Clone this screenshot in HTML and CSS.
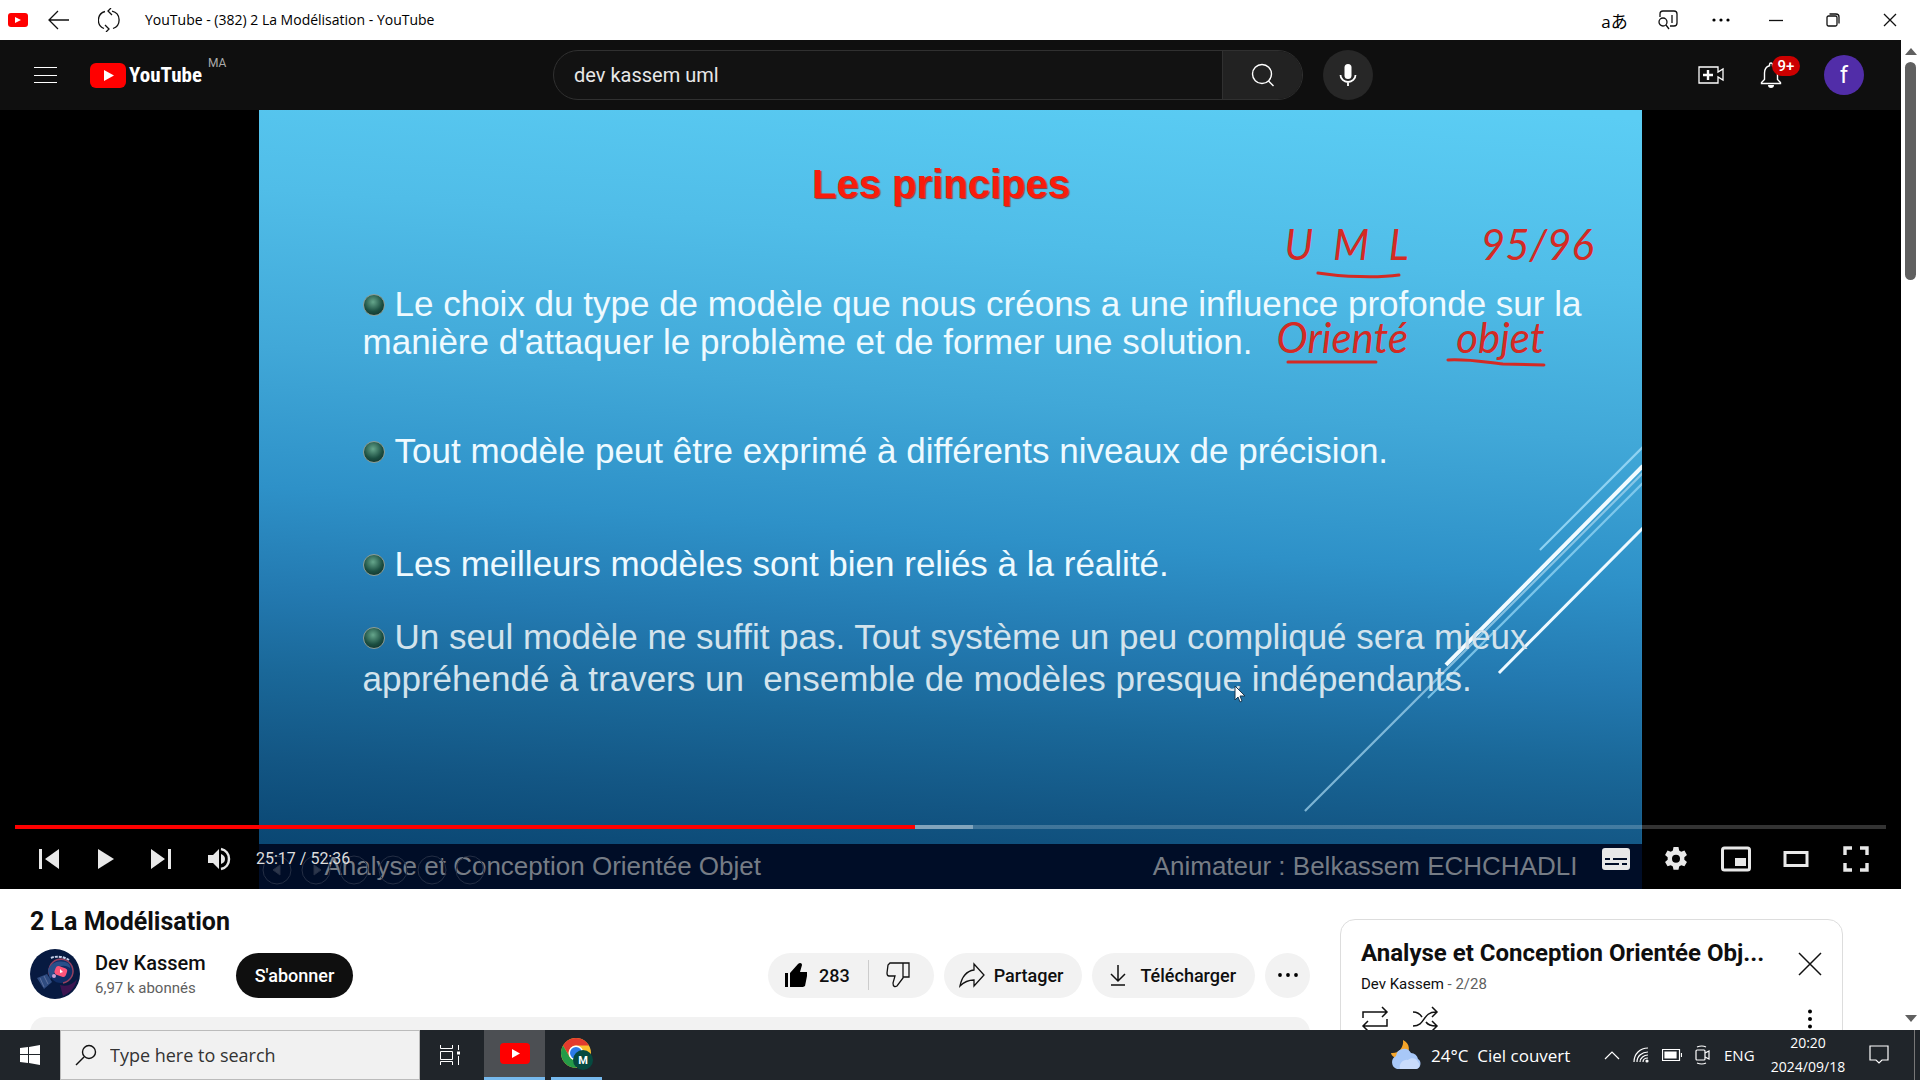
FILE: index.html
```html
<!DOCTYPE html>
<html lang="fr">
<head>
<meta charset="utf-8">
<title>YouTube - (382) 2 La Modélisation - YouTube</title>
<link rel="stylesheet" href="styles.css">
</head>
<body>
<div class="titlebar">
  <svg class="tb-logo" viewBox="0 0 20 14" width="20" height="14"><rect width="20" height="14" rx="3" fill="#f00"/><path d="M7 4v6l6-3z" fill="#fff"/></svg>
  <button class="plain" aria-label="Retour"><svg width="22" height="20" viewBox="0 0 22 20" class="line"><path d="M21 10H1M10 1L1 10l9 9"/></svg></button>
  <button class="plain refresh" aria-label="Actualiser"><svg width="22" height="24" viewBox="0 0 22 24" class="line"><path d="M7 3.500A9 9 0 0 0 6 20.500M15 20.500A9 9 0 0 0 14 3.200M13 0L10 3l4 4M8 24l3-3-4-4"/></svg></button>
  <span class="tb-title">YouTube - (382) 2 La Modélisation - YouTube</span>
  <div class="tb-right">
    <button class="plain translate" aria-label="Traduire">aあ</button>
    <button class="plain" aria-label="Rechercher dans la page"><svg width="20" height="20" viewBox="0 0 20 20" class="line"><path d="M2 7V4a3 3 0 0 1 3-3h11a3 3 0 0 1 3 3v9a3 3 0 0 1-3 3h-4M14 5v8M8 15l3 4"/><circle cx="5" cy="12" r="4"/></svg></button>
    <button class="plain" aria-label="Plus"><svg width="18" height="4" viewBox="0 0 18 4"><circle cx="2" cy="2" r="1.600"/><circle cx="9" cy="2" r="1.600"/><circle cx="16" cy="2" r="1.600"/></svg></button>
    <button class="plain" aria-label="Réduire"><svg width="14" height="14" viewBox="0 0 14 14" class="line"><path d="M0 7.500h14"/></svg></button>
    <button class="plain" aria-label="Restaurer"><svg width="14" height="14" viewBox="0 0 14 14" class="line"><rect x="1" y="3" width="10" height="10" rx="1.500"/><path d="M3.500 1H10a3 3 0 0 1 3 3v6.500"/></svg></button>
    <button class="plain" aria-label="Fermer"><svg width="14" height="14" viewBox="0 0 14 14" class="line"><path d="M1 1l12 12M13 1L1 13"/></svg></button>
  </div>
</div>

<div class="viewport">
  <div class="page">
    <header class="masthead">
      <div class="mh-left">
        <button class="plain" aria-label="Menu"><svg width="24" height="18" viewBox="0 0 24 18" stroke="#fff"><path d="M0 1.500h23M0 9.500h23M0 16.500h23"/></svg></button>
        <a class="logo" href="#"><svg viewBox="0 0 36 25" width="36" height="25"><rect width="36" height="25" rx="6" fill="#f00"/><path d="M14 7v11l10-5.500z" fill="#fff"/></svg><span>YouTube</span><sup>MA</sup></a>
      </div>
      <div class="mh-center">
        <form class="search">
          <input type="text" value="dev kassem uml" aria-label="Rechercher">
          <button type="button" aria-label="Lancer la recherche"><svg width="24" height="24" viewBox="0 0 24 24" fill="none" stroke="#fff" stroke-width="1.400"><circle cx="11" cy="11" r="9.500"/><path d="M17.500 18l5 5"/></svg></button>
        </form>
        <button class="mic" aria-label="Recherche vocale"><svg width="18" height="24" viewBox="0 0 18 24"><rect x="5.500" y="1" width="7" height="15" rx="3.500" fill="#fff"/><path d="M1.500 12a7.500 7 0 0 0 15 0M9 19v4" fill="none" stroke="#fff" stroke-width="1.800"/></svg></button>
      </div>
      <div class="mh-right">
        <button class="plain" aria-label="Créer"><svg width="26" height="20" viewBox="0 0 26 20" fill="none" stroke="#fff"><path d="M1 2h19v5l5-3v11l-5-3v6H1z" stroke-width="1.300"/><path d="M10 5v10M5 10h10" stroke-width="2.400"/></svg></button>
        <button class="plain bell" aria-label="Notifications"><svg width="22" height="26" viewBox="0 0 22 26"><path d="M1.500 21.500v-1l3-3V11c0-4 2-6.500 5-7.300V2.500a1.500 1.500 0 0 1 3 0v1.200c3 .8 5 3.300 5 7.300v6.500l3 3v1z" fill="none" stroke="#fff" stroke-width="1.400"/><path d="M8 23h6a3 3 0 0 1-6 0z" fill="#fff"/></svg><span class="badge">9+</span></button>
        <button class="account" aria-label="Compte">f</button>
      </div>
    </header>

    <section class="player">
      <div class="slide">
        <svg class="art" viewBox="0 0 1384 779" preserveAspectRatio="none" aria-hidden="true">
          <g fill="none" stroke="#8fd2f2" stroke-width="2.200">
            <path d="M1281 440L1384 337"/>
            <path d="M1384 363L1046 701" stroke="#9fd2ec" stroke-opacity=".75"/>
            <path d="M1384 373L1169 588" stroke-opacity=".8"/>
          </g>
          <path d="M1384 356L1187 555" stroke="#f2fbff" stroke-width="4"/>
          <path d="M1384 418L1240 563" stroke="#eef9ff" stroke-width="3"/>
          <path d="M1383.500 0v735" stroke="#6cc4ea" stroke-opacity=".6"/>
          <g fill="none" stroke="#d42a24" stroke-width="3" stroke-linecap="round">
            <path d="M1059 163c25 4 60 5 81 2M1029 252h88M1189 250c25-1 40 3 55 4l41 1"/>
          </g>
        </svg>
        <h2>Les principes</h2>
        <ul class="principles">
          <li><i class="bullet"></i>Le choix du type de modèle que nous créons a une influence profonde sur la<br>manière d'attaquer le problème et de former une solution.</li>
          <li><i class="bullet"></i>Tout modèle peut être exprimé à différents niveaux de précision.</li>
          <li><i class="bullet"></i>Les meilleurs modèles sont bien reliés à la réalité.</li>
          <li><i class="bullet"></i>Un seul modèle ne suffit pas. Tout système un peu compliqué sera mieux<br>appréhendé à travers un&nbsp; ensemble de modèles presque indépendants.</li>
        </ul>
        <div class="ink ink-top"><span>U&nbsp; M&nbsp; L</span><span>95/96</span></div>
        <div class="ink ink-bottom"><span>Orienté</span><span>objet</span></div>
        <svg class="pointer" width="12" height="18" viewBox="0 0 12 18"><path d="M1 1v14l3-3 2 5 2-1-2-5h5z" fill="#fff" stroke="#1b3a52"/></svg>
        <div class="slide-foot">
          <svg class="nav-dots" width="230" height="32" viewBox="0 0 230 32" fill="none" stroke="#242e44"><circle cx="18" cy="16" r="14"/><circle cx="57" cy="16" r="14"/><circle cx="95" cy="16" r="14"/><circle cx="134" cy="16" r="14"/><circle cx="173" cy="16" r="14"/><circle cx="211" cy="16" r="14"/><path d="M21 11v10l-7-5zM55 11v10l7-5z" fill="#2c364b"/></svg>
          <span>Analyse et Conception Orientée Objet</span><span>Animateur : Belkassem ECHCHADLI</span>
        </div>
      </div>
      <div class="controls">
        <div class="progress"><div class="loaded"></div><div class="played"></div></div>
        <div class="control-row">
          <button class="plain" aria-label="Précédente"><svg width="24" height="24" viewBox="0 0 24 24"><path d="M2 2h3v20H2zM22 2v20L8 12z"/></svg></button>
          <button class="plain" aria-label="Lecture"><svg width="24" height="24" viewBox="0 0 24 24"><path d="M5 2l16 10L5 22z"/></svg></button>
          <button class="plain" aria-label="Suivante"><svg width="24" height="24" viewBox="0 0 24 24"><path d="M19 2h3v20h-3zM2 2v20l14-10z"/></svg></button>
          <button class="plain volume" aria-label="Son"><svg width="24" height="24" viewBox="0 0 24 24"><path d="M1 8h5l6-6v20l-6-6H1zM14 7c3 1 4 3 4 5s-1 4-4 5z"/><path d="M14 2c5 1 8 5 8 10s-3 9-8 10" fill="none" stroke="#e8e8e8" stroke-width="2.500"/></svg></button>
          <span class="time">25:17 / 52:36</span>
          <div class="control-right">
            <button class="plain" aria-label="Sous-titres"><svg width="30" height="24" viewBox="0 0 30 24"><path fill-rule="evenodd" d="M4 1h22a3 3 0 0 1 3 3v16a3 3 0 0 1-3 3H4a3 3 0 0 1-3-3V4a3 3 0 0 1 3-3zm0 10v2h5v-2zm8 0v2h14v-2zM4 16v2h14v-2zm17 0v2h5v-2z"/></svg></button>
            <button class="plain" aria-label="Paramètres"><svg width="26" height="26" viewBox="0 0 24 24"><path fill-rule="evenodd" d="M9.700 1h4.600l.6 3.100 1.900 1.100 3-1 2.300 4-2.400 2.100v2.400l2.400 2.100-2.300 4-3-1-1.900 1.100-.6 3.100H9.700l-.6-3.100-1.900-1.100-3 1-2.300-4 2.400-2.100v-2.400L1.900 8.200l2.300-4 3 1 1.900-1.100zM12 8a3.700 3.700 0 1 0 0 7.400A3.700 3.700 0 0 0 12 8z"/></svg></button>
            <button class="plain" aria-label="Lecteur réduit"><svg width="32" height="26" viewBox="0 0 32 26"><rect x="2.500" y="2" width="27" height="22" rx="2" fill="none" stroke="#e8e8e8" stroke-width="3"/><path d="M15 12h11v8H15z"/></svg></button>
            <button class="plain" aria-label="Mode cinéma"><svg width="26" height="18" viewBox="0 0 26 18"><path d="M2 2.500h22v13H2z" fill="none" stroke="#e8e8e8" stroke-width="3"/></svg></button>
            <button class="plain" aria-label="Plein écran"><svg width="26" height="26" viewBox="0 0 26 26"><path d="M2 9V2h7M17 2h7v7M24 17v7h-7M9 24H2v-7" fill="none" stroke="#e8e8e8" stroke-width="3.400"/></svg></button>
          </div>
        </div>
      </div>
    </section>

    <main class="below">
      <div class="primary">
        <h1>2 La Modélisation</h1>
        <div class="meta">
          <svg class="channel-pic" width="50" height="50" viewBox="0 0 50 50"><circle cx="25" cy="25" r="25" fill="#071a41"/><path d="M30 36c8 2 13-1 17-6-2 9-7 14-14 17z" fill="#3c1550"/><circle cx="31" cy="22" r="12" fill="#102d66"/><path d="M20 27a12 12 0 1 1 13 7" fill="none" stroke="#95405f" stroke-width="1.500"/><path d="M18 22a13 10 0 0 1 17-9c4 1 6 4 5 6-5-3-9-3-13 1l-7 10z" fill="#294f8a"/><path d="M7 29l10-4 5 8-8 7z" fill="#2e4b80"/><path d="M10 29l4 9M14 27l4 8" stroke="#5d719f"/><rect x="25" y="18" width="12" height="9" rx="3" transform="rotate(20 31 22)" fill="#ff557b"/><path d="M30 20v4l3-1z" fill="#fff"/><circle cx="24" cy="27" r="2" fill="#c7a1d5"/><path d="M21 9c4-2 12-2 18 2" fill="none" stroke="#c7d0e8" stroke-width="2" stroke-dasharray="3 1"/></svg>
          <div class="channel"><a href="#">Dev Kassem</a><span>6,97 k abonnés</span></div>
          <button class="subscribe">S'abonner</button>
          <div class="actions">
            <div class="pill likes">
              <button class="like"><svg width="24" height="26" viewBox="0 0 24 26"><path d="M1 11h3v14H1zM6 11l8-9c2-2 4-1 4 1l-2 7h7v4l-2 10-2 1H6z"/></svg>283</button>
              <button class="dislike" aria-label="Je n'aime pas"><svg width="24" height="26" viewBox="0 0 24 26" class="line"><path d="M17 1H4L2 3 1 11c0 2 1 3 2 3h6l-2 7c0 4 2 4 4 3l6-8zM17 1h6v14h-6"/></svg></button>
            </div>
            <button class="pill share"><svg width="26" height="26" viewBox="0 0 26 26" class="line"><path d="M15 2l10 11-10 11v-6c-6 0-10 2-14 6C3 14 8 9 15 8z"/></svg>Partager</button>
            <button class="pill download"><svg width="20" height="24" viewBox="0 0 20 24" class="line"><path d="M10 2v16M3 11l7 7 7-7M3 22h14" stroke-width="1.500"/></svg>Télécharger</button>
            <button class="pill more" aria-label="Plus d'actions"><svg width="20" height="4" viewBox="0 0 20 4"><circle cx="2" cy="2" r="1.900"/><circle cx="10" cy="2" r="1.900"/><circle cx="18" cy="2" r="1.900"/></svg></button>
          </div>
        </div>
        <div class="description"></div>
      </div>
      <aside class="playlist">
        <div class="pl-head">
          <div><h3>Analyse et Conception Orientée Obj...</h3><p>Dev Kassem <span>- 2/28</span></p></div>
          <button class="plain" aria-label="Fermer la playlist"><svg width="24" height="24" viewBox="0 0 24 24" class="line"><path d="M1 1l22 22M23 1L1 23" stroke-width="1.500"/></svg></button>
        </div>
        <div class="pl-tools">
          <button class="plain" aria-label="Lire en boucle"><svg width="28" height="26" viewBox="0 0 28 26" class="line"><path d="M2 12V6h23M21 1l5 5-5 5M26 13v7H3M7 15l-5 5 5 5" stroke-width="1.500"/></svg></button>
          <button class="plain" aria-label="Aléatoire"><svg width="28" height="26" viewBox="0 0 28 26" class="line"><path d="M2 6c5 0 7 2 9 5M15 16c2 3 5 4 10 4M2 20C15 20 11 6 25 6M21 1l5 5-5 5M21 15l5 5-5 5" stroke-width="1.500"/></svg></button>
          <button class="plain kebab" aria-label="Options"><svg width="6" height="20" viewBox="0 0 6 20"><circle cx="3" cy="2.500" r="2"/><circle cx="3" cy="10" r="2"/><circle cx="3" cy="17.500" r="2"/></svg></button>
        </div>
      </aside>
    </main>
  </div>
  <div class="scrollbar"><i class="up"></i><div class="track"><div class="thumb"></div></div><i class="down"></i></div>
</div>

<footer class="taskbar">
  <button class="plain start" aria-label="Démarrer"><svg width="20" height="20" viewBox="0 0 20 20" fill="#fff"><path d="M0 3l8-1v7H0zM9 2l11-2v9H9zM0 10h8v8l-8-1zM9 10h11v10L9 18z"/></svg></button>
  <label class="tk-search"><svg width="22" height="22" viewBox="0 0 22 22" class="line"><circle cx="14" cy="8" r="6.500" stroke-width="1.400"/><path d="M9 13l-8 8" stroke-width="1.400"/></svg><input type="text" placeholder="Type here to search" aria-label="Type here to search"></label>
  <button class="plain taskview" aria-label="Vue des tâches"><svg width="20" height="20" viewBox="0 0 20 20" fill="none" stroke="#fff"><path d="M.5 0v3.500h12V0M.5 6.500h12v8H.5zM.5 20v-3.500h12V20M18.500 0v5M18.500 11v9"/><path d="M17 6.500h3v3h-3z" fill="#fff" stroke="none"/></svg></button>
  <button class="plain app active" aria-label="YouTube"><svg width="30" height="21" viewBox="0 0 30 21"><rect width="30" height="21" rx="4" fill="#f00"/><path d="M12 6v9l8-4.500z" fill="#fff"/></svg></button>
  <button class="plain app running" aria-label="Chrome"><svg width="32" height="32" viewBox="0 0 32 32"><circle cx="15" cy="15" r="15" fill="#fbc02d"/><path d="M15 0a15 15 0 0 1 13 7.500H15a7.500 7.500 0 0 0-6.500 11L2 7.500A15 15 0 0 1 15 0z" fill="#e33b2e"/><path d="M2 7.500l6.500 11.200A7.500 7.500 0 0 0 21 19l-6.500 11A15 15 0 0 1 2 7.500z" fill="#259b48"/><circle cx="15" cy="15" r="7.500" fill="#fff"/><circle cx="15" cy="15" r="6" fill="#2b7be9"/><circle cx="22" cy="22" r="10" fill="#064a40"/><text x="22" y="26" text-anchor="middle" class="profile">M</text></svg></button>
  <div class="tray">
    <svg width="32" height="30" viewBox="0 0 32 30"><path d="M13 0c7 3 8 12 2 16S2 18 1 13c8 1 13-6 12-13z" fill="#f5a52a"/><path d="M7 29a7 7 0 0 1-1-13 8 8 0 0 1 15-3 7 7 0 0 1 7 6 5.500 5.500 0 0 1-2 10z" fill="#a8c8f8"/><path d="M10 29a7 7 0 0 1 8-9c3-3 9-2 10 2a4 4 0 0 1-2 7z" fill="#c9dcfc"/></svg>
    <span class="weather">24°C&nbsp; Ciel couvert</span>
    <svg width="16" height="10" viewBox="0 0 16 10" class="wline chevron"><path d="M1 9l7-7 7 7"/></svg>
    <svg width="16" height="16" viewBox="0 0 16 16" class="wline"><path d="M1 15C1 7 7 1 15 1M4 15C4 9 9 5 15 5M7 15c0-4 4-7 8-7M10 15c0-3 2-4 5-4"/><circle cx="14" cy="14" r="1" fill="#fff"/></svg>
    <svg width="20" height="12" viewBox="0 0 20 12" class="wline"><path d="M.5.5h17v11H.5zM19.500 4v4"/><path d="M3 3h11v6H3z" fill="#fff"/></svg>
    <svg width="16" height="20" viewBox="0 0 16 20" class="wline"><rect x="1" y="5" width="9" height="10" rx="1"/><path d="M10 8l4-2v8l-4-2M2 2q5-2 9 0M2 18q5 2 9 0"/></svg>
    <span class="lang">ENG</span>
    <div class="clock"><span>20:20</span><span>2024/09/18</span></div>
    <svg width="20" height="20" viewBox="0 0 20 20" class="wline"><path d="M1 1h18v14h-6l-3 3-3-3H1z"/></svg>
    <div class="desktop-edge"></div>
  </div>
</footer>
</body>
</html>
```

FILE: styles.css
```css
* { box-sizing: border-box; margin: 0; }
body { height: 100vh; display: flex; flex-direction: column; overflow: hidden; font-family: Roboto, sans-serif; color: #0f0f0f; background: #fff; }
button, input { font: inherit; color: inherit; border: 0; padding: 0; background: none; outline: 0; }
a { color: inherit; text-decoration: none; }
svg { display: block; flex: none; }
.plain { display: flex; align-items: center; justify-content: center; flex: none; }
.line { fill: none; stroke: #111; stroke-width: 1.3; }
.wline { fill: none; stroke: #fff; stroke-width: 1.2; }

/* window title bar */
.titlebar { flex: none; height: 40px; padding: 0 2px 0 8px; display: flex; align-items: center; background: #fff; color: #000; }
.tb-logo { margin-right: 20px; }
.refresh { margin: 0 25px 0 28px; }
.tb-title { font: 14px/20px "Open Sans", sans-serif; }
.tb-right { margin-left: auto; display: grid; grid-template-columns: repeat(3, 53px) repeat(3, 57px); }
.tb-right .plain { height: 38px; }
.translate { font: 17px "Open Sans", "Noto Sans CJK JP", sans-serif; }

.viewport { flex: 1; min-height: 0; display: flex; }
.page { flex: 1; min-width: 0; overflow: hidden; }

/* page header */
.masthead { height: 70px; padding: 0 37px 0 34px; display: grid; grid-template-columns: 519px 1fr 200px; align-items: center; background: #0f0f0f; color: #fff; }
.mh-left, .logo, .mh-center, .mh-right { display: flex; align-items: center; }
.mh-left { gap: 32px; }
.logo { gap: 3px; }
.logo span { font: bold 21px/28px "Roboto Condensed", "Liberation Sans Narrow", Roboto, sans-serif; }
.logo sup { font-size: 12px; line-height: 12px; color: #aaa; align-self: flex-start; margin-left: 3px; margin-top: -4px; }
.mh-center { gap: 20px; }
.search { display: flex; width: 750px; height: 50px; border: 1px solid #303030; border-radius: 25px; overflow: hidden; background: #121212; }
.search input { flex: 1; min-width: 0; padding-left: 20px; font-size: 20px; color: #e8e8e8; }
.search button { width: 80px; display: flex; align-items: center; justify-content: center; background: #222; border-left: 1px solid #303030; }
.mic { width: 50px; height: 50px; border-radius: 50%; background: #272727; display: flex; align-items: center; justify-content: center; }
.mh-right { justify-content: flex-end; gap: 36px; }
.bell { position: relative; }
.badge { position: absolute; left: 12px; top: -6px; width: 28px; height: 20px; border-radius: 10px; background: #c00; font: 500 15px/20px Roboto, sans-serif; text-align: center; }
.account { width: 40px; height: 40px; border-radius: 50%; background: #512da8; font-size: 24px; margin-left: 6px; }

/* player */
.player { position: relative; display: flex; justify-content: center; background: #000; }
.slide { position: relative; width: 72.8%; aspect-ratio: 1384 / 779; display: flex; flex-direction: column; overflow: hidden; font-family: "Liberation Sans", Arial, sans-serif; background: linear-gradient(184deg, #5bcdf4 1%, #50bde8 20%, #41a8d8 38%, #2e91c8 54%, #2379b0 66%, #1a6899 75%, #135684 85%, #094571 96%); }
.art { position: absolute; inset: 0; width: 100%; height: 100%; }
.slide h2 { position: relative; margin: 50px 0 77px; padding-right: 19px; text-align: center; font-size: 40px; line-height: 48px; color: #f81c0c; text-shadow: 1px 1px 1px #8d3a3a; }
.principles { position: relative; list-style: none; padding-left: 104px; font-size: 35px; line-height: 38px; color: #eefaff; white-space: nowrap; }
.principles li { margin-bottom: 71px; }
.principles li:nth-child(2) { margin-bottom: 75px; }
.principles li:nth-child(3) { margin-bottom: 33px; }
.principles li:nth-child(4) { margin: 0; line-height: 42px; color: #d3e3ec; }
.bullet { display: inline-block; width: 22px; height: 22px; margin-right: 10px; border-radius: 50%; border: 1px solid #8f9d93; background: radial-gradient(circle at 45% 35%, #66a68c, #1c4f42 55%, #0a2521); }
.ink { position: absolute; display: flex; color: #d42a24; font: italic 42px/40px Lato, sans-serif; white-space: nowrap; }
.ink-top { left: 1026px; top: 114px; gap: 72px; }
.ink-bottom { left: 1018px; top: 207px; gap: 48px; }
.pointer { position: absolute; left: 975px; top: 575px; }
.slide-foot { position: relative; margin-top: auto; height: 45px; padding: 0 65px 0 66px; display: flex; align-items: center; justify-content: space-between; font-size: 26px; color: #767c85; background: #000d27; }
.nav-dots { position: absolute; left: 0; top: 10px; }
.controls { position: absolute; left: 15px; right: 15px; bottom: 0; height: 64px; }
.progress { position: relative; height: 4px; background: rgba(255, 255, 255, .2); }
.loaded, .played { position: absolute; left: 0; top: 0; bottom: 0; width: 51.2%; background: rgba(255, 255, 255, .35); }
.played { width: 48.1%; background: #f00; }
.control-row { height: 60px; display: flex; align-items: center; padding-left: 6px; fill: #e8e8e8; }
.control-row .plain { width: 56px; height: 60px; }
.control-row .volume { width: 60px; }
.time { margin-left: 7px; font-size: 16px; color: #ddd; }
.control-right { margin-left: auto; display: flex; }
.control-right .plain { width: 60px; }

/* below the player */
.below { padding: 30px 58px 0 30px; display: grid; grid-template-columns: 1fr 503px; gap: 30px; }
h1 { font-size: 25px; font-weight: 700; line-height: 30px; margin-top: -12px; }
.meta { display: flex; align-items: center; height: 60px; margin: 7px 0 13px; }
.channel { margin: 2px 0 0 15px; width: 141px; display: flex; flex-direction: column; }
.channel a { font-size: 20px; font-weight: 500; line-height: 26px; }
.channel span { font-size: 15px; line-height: 24px; color: #606060; }
.subscribe { width: 117px; height: 45px; margin-top: 3px; border-radius: 23px; background: #0f0f0f; color: #fff; font-size: 18px; font-weight: 500; }
.actions { margin: 3px 0 0 auto; display: flex; gap: 10px; font-size: 18px; font-weight: 500; }
.pill { height: 45px; border-radius: 23px; background: #f2f2f2; display: flex; align-items: center; }
.like { display: flex; align-items: center; gap: 11px; padding: 0 18px 0 16px; border-right: 1px solid #ccc; height: 30px; }
.dislike { padding: 0 24px 0 17px; }
.share { gap: 9px; padding: 0 19px 0 15px; }
.download { gap: 12px; padding: 0 19px 0 16px; }
.more { width: 45px; justify-content: center; }
.description { height: 120px; border-radius: 15px; background: #f2f2f2; }
.playlist { height: 400px; border: 1px solid #ddd; border-radius: 15px; padding: 18px 20px; }
.pl-head { display: flex; justify-content: space-between; }
.pl-head .plain { height: 52px; }
.playlist h3 { font: 700 24px/30px Roboto, sans-serif; white-space: nowrap; }
.playlist p { margin-top: 4px; font-size: 15px; line-height: 24px; }
.playlist p span { color: #606060; }
.pl-tools { display: flex; gap: 22px; margin-top: 10px; }
.kebab { margin-left: auto; width: 24px; }

/* page scrollbar */
.scrollbar { flex: none; width: 19px; display: flex; flex-direction: column; align-items: center; padding: 8px 0; background: #fff; }
.up, .down { border: 6px solid transparent; border-top: 0; border-bottom: 7px solid #606060; }
.down { transform: rotate(180deg); }
.track { flex: 1; width: 11px; margin: 7px 0; }
.thumb { height: 23%; border-radius: 6px; background: #606060; }

/* taskbar */
.taskbar { flex: none; height: 50px; display: flex; background: #20252a; color: #fff; font-family: "Open Sans", sans-serif; }
.start { width: 60px; }
.tk-search { width: 360px; display: flex; align-items: center; gap: 13px; padding-left: 14px; background: #f1f1f1; border: 1px solid #bbb; }
.tk-search input { flex: 1; min-width: 0; font-size: 18px; }
.tk-search input::placeholder { color: #333; opacity: 1; }
.taskview { width: 64px; padding-right: 4px; }
.app { width: 61px; border-bottom: 3px solid transparent; }
.active { background: #4c4f53; border-color: #76b9ed; }
.running { width: 51px; margin-left: 6px; border-color: #76b9ed; }
.profile { font: bold 11px Roboto, sans-serif; fill: #fff; }
.tray { margin-left: auto; display: flex; align-items: center; }
.weather { font-size: 17px; margin-left: 9px; width: 143px; white-space: nowrap; }
.chevron { margin: 0 0 0 30px; }
.chevron ~ svg { margin-left: 13px; }
.lang { font-size: 15px; width: 30px; margin-left: 13px; }
.clock { width: 78px; margin-left: 15px; display: flex; flex-direction: column; text-align: center; font-size: 14px; line-height: 24px; }
.tray .clock + svg { margin-left: 22px; }
.desktop-edge { height: 50px; width: 6px; margin-left: 25px; border-left: 1px solid #777; }
```
